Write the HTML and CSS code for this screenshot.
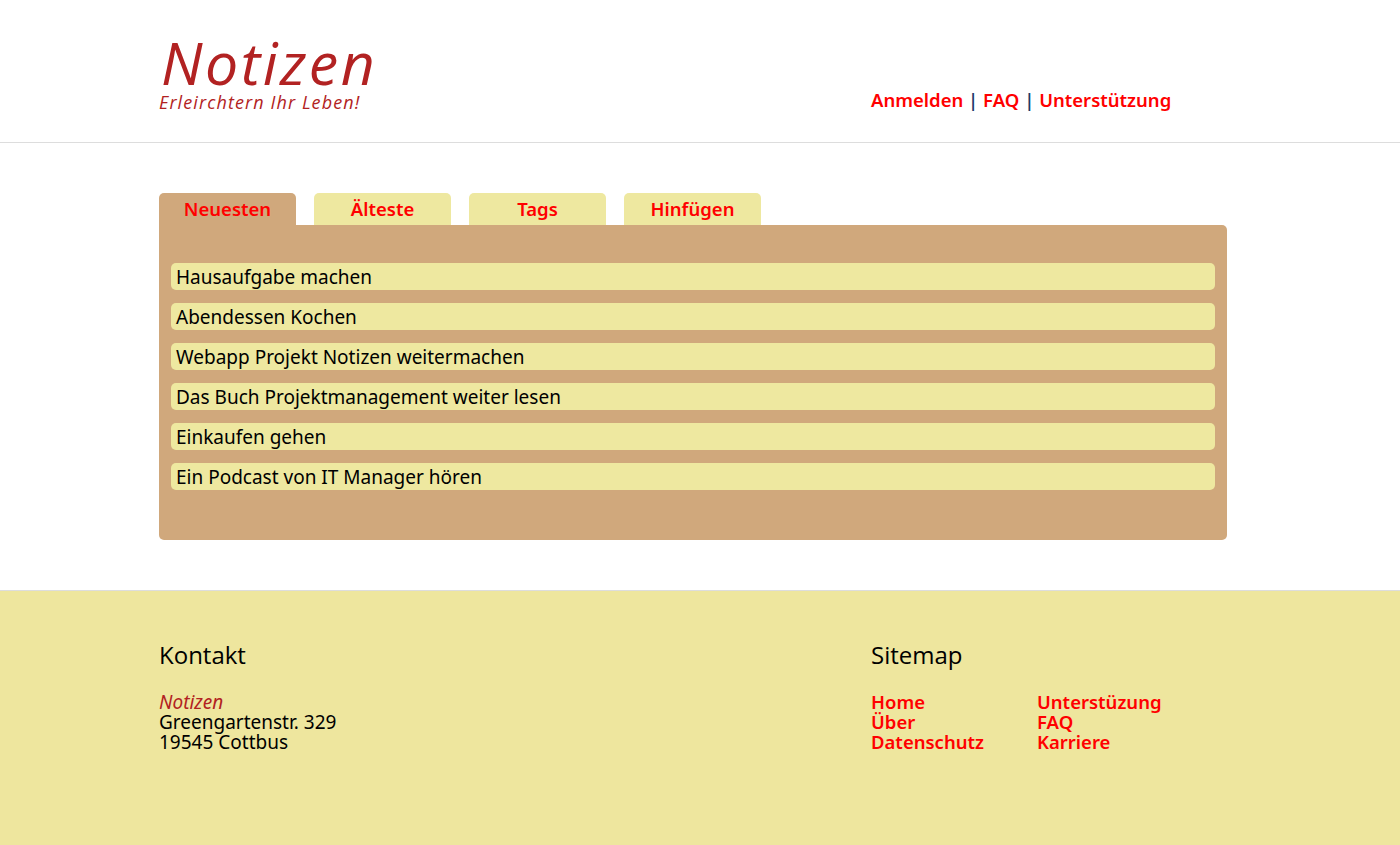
FILE: index.html
```html
<!DOCTYPE html>
<html lang="de">
<head>
<meta charset="utf-8">
<title>Notizen</title>
<link rel="stylesheet" href="styles.css">
</head>
<body>
<header class="site-header">
  <div class="container header-inner">
    <div class="brand">
      <div class="brand-title">Notizen</div>
      <div class="brand-sub">Erleirchtern Ihr Leben!</div>
    </div>
    <nav class="top-nav">
      <a href="#">Anmelden</a> <span class="sep">|</span> <a href="#">FAQ</a> <span class="sep">|</span> <a href="#">Unterstützung</a>
    </nav>
  </div>
</header>
<main class="container main">
  <div class="tabs">
    <div class="tab active">Neuesten</div>
    <div class="tab">Älteste</div>
    <div class="tab">Tags</div>
    <div class="tab">Hinfügen</div>
  </div>
  <div class="panel">
    <div class="item">Hausaufgabe machen</div>
    <div class="item">Abendessen Kochen</div>
    <div class="item">Webapp Projekt Notizen weitermachen</div>
    <div class="item">Das Buch Projektmanagement weiter lesen</div>
    <div class="item">Einkaufen gehen</div>
    <div class="item">Ein Podcast von IT Manager hören</div>
  </div>
</main>
<footer class="site-footer">
  <div class="container footer-inner">
    <div class="contact">
      <h3 class="foot-title">Kontakt</h3>
      <div class="address">
        <div class="addr-name">Notizen</div>
        <div>Greengartenstr. 329</div>
        <div>19545 Cottbus</div>
      </div>
    </div>
    <div class="sitemap">
      <h3 class="foot-title">Sitemap</h3>
      <div class="sitemap-cols">
        <div class="col">
          <a href="#">Home</a>
          <a href="#">Über</a>
          <a href="#">Datenschutz</a>
        </div>
        <div class="col">
          <a href="#">Unterstüzung</a>
          <a href="#">FAQ</a>
          <a href="#">Karriere</a>
        </div>
      </div>
    </div>
  </div>
</footer>
</body>
</html>
```

FILE: styles.css
```css
* { box-sizing: border-box; }
html, body { margin: 0; padding: 0; }
body {
  font-family: "Noto Sans", "Open Sans", sans-serif;
  background: #ffffff;
  color: #000;
}
a { color: #ff0000; text-decoration: none; }
.container {
  width: 1068px;
  margin-left: calc(50% - 541px);
}
.site-header {
  border-bottom: 1px solid #dddddd;
  height: 143px;
}
.header-inner {
  display: flex;
  justify-content: space-between;
  align-items: flex-end;
  height: 100%;
  padding-bottom: 30px;
}
.brand-title {
  font-family: "Open Sans", sans-serif;
  font-style: italic;
  font-size: 59px;
  line-height: 60px;
  color: #b22222;
  letter-spacing: 2.5px;
  padding-left: 2px;
}
.brand-sub {
  font-family: "Open Sans", sans-serif;
  font-style: italic;
  font-size: 18px;
  line-height: 20px;
  color: #b22222;
  letter-spacing: 1.1px;
}
.top-nav {
  font-size: 18.5px;
  font-weight: 600;
  width: 356px;
  line-height: 24px;
  color: #1d3b6a;
}
.main {
  padding-top: 50px;
  padding-bottom: 50px;
}
.tabs {
  display: flex;
  gap: 18px;
}
.tab {
  width: 137px;
  height: 32px;
  background: #eee8a0;
  border-radius: 5px 5px 0 0;
  color: #ff0000;
  font-size: 18.5px;
  font-weight: 600;
  text-align: center;
  line-height: 31px;
}
.tab.active { background: #d0a87c; }
.panel {
  background: #d0a87c;
  border-radius: 0 5px 5px 5px;
  padding: 38px 12px 50px;
  display: flex;
  flex-direction: column;
  gap: 13px;
}
.item {
  background: #eee8a0;
  border-radius: 5px;
  height: 27px;
  line-height: 28px;
  padding-left: 5px;
  font-size: 19px;
}
.site-footer {
  background: #eee69e;
  border-top: 1px solid #dddddd;
  height: 255px;
}
.footer-inner {
  display: flex;
  padding-top: 48px;
}
.contact { width: 712px; }
.foot-title {
  font-family: "Open Sans", sans-serif;
  font-weight: 400;
  font-size: 24px;
  line-height: 32px;
  margin: 0 0 21px;
}
.address {
  font-size: 19px;
  line-height: 20px;
}
.addr-name { font-style: italic; color: #b22222; }
.sitemap-cols { display: flex; }
.col {
  display: flex;
  flex-direction: column;
  width: 166px;
  font-size: 18.5px;
  font-weight: 600;
  line-height: 20px;
}
```
